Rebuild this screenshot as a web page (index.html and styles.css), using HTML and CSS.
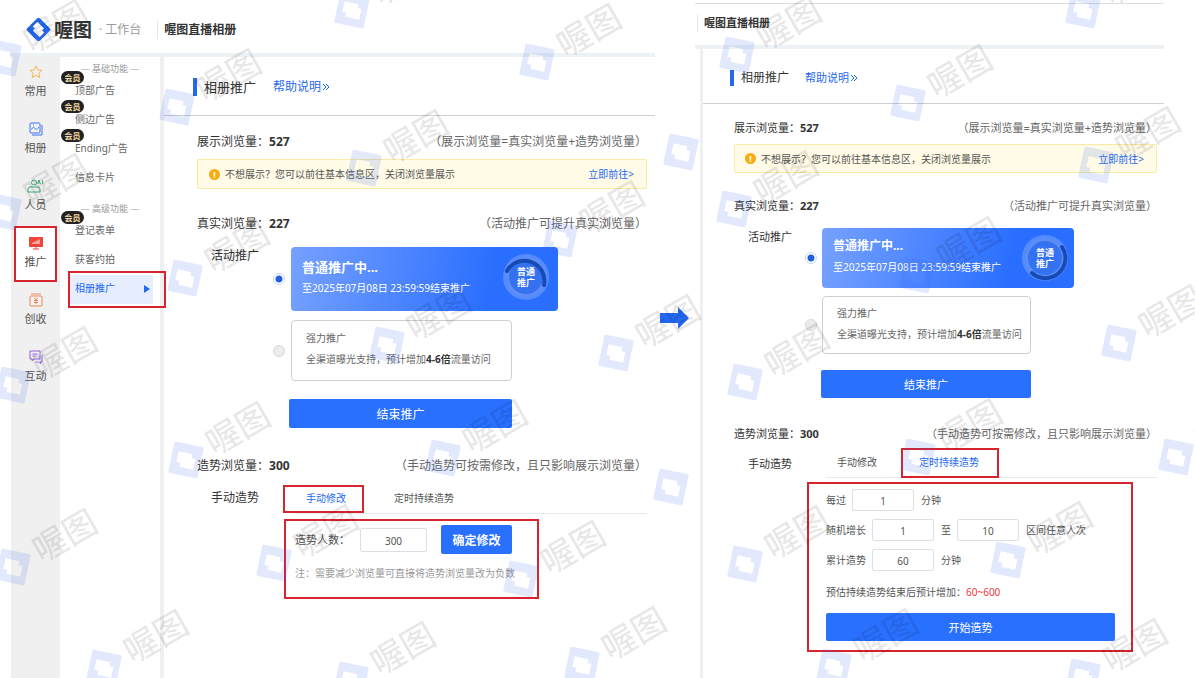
FILE: index.html
```html
<!DOCTYPE html>
<html lang="zh-CN">
<head>
  <meta charset="UTF-8" />
  <meta name="viewport" content="width=device-width, initial-scale=1" />
  <title>喔图直播相册</title>
  <link rel="stylesheet" href="styles.css">
</head>
<body>
  <section class="panel panel-main">
    <header class="topbar">
      <svg class="logo" viewBox="-12 -12 24 24"><rect transform="rotate(45)" x="-8.500" y="-8.500" width="17" height="17" rx="2" fill="#2468f2"/><path transform="rotate(45)" fill="#fff" d="M-6-4.500H3v2.500h3v6.500h-9V2h-3z"/></svg>
      <span class="brand">喔图</span>
      <span class="brand-sub">· 工作台</span>
      <span class="site-name">喔图直播相册</span>
    </header>
    <div class="workspace">
      <nav class="rail">
        <a href="#" class="rail-item">
          <svg viewBox="0 0 14 14" stroke="#f2b84b"><path d="M7 1l1.800 3.900 4.200.5-3.100 2.900.8 4.200L7 10.400l-3.700 2.100.8-4.200L1 5.400l4.200-.5z"/></svg>
          常用
        </a>
        <a href="#" class="rail-item">
          <svg viewBox="0 0 14 14" stroke="#3f74f0"><rect x="1" y="1" width="10" height="10" rx="1"/><path d="M13 3v10H3M2.500 7.500C4 4.500 5 5 6 6.500s2 1 4-1.500M4 3h1"/></svg>
          相册
        </a>
        <a href="#" class="rail-item">
          <svg class="wide" viewBox="0 0 17 14" stroke="#3fae7c"><circle cx="7" cy="3.500" r="2.500"/><path d="M1 13v-3q0-2 2-2h8q2 0 2 2v3z"/><path stroke-width=".9" d="M10.500 5l1.500-4 1.500 4M11 4h2M15.500 1v4"/></svg>
          人员
        </a>
        <a href="#" class="rail-item active">
          <svg viewBox="0 0 14 14"><rect width="14" height="10" y="1" rx="1" fill="#f0463a"/><path stroke="#fff" d="M4 8V6.500M6 8V5.500M8 8V4.500M10 8V3.500"/><path stroke="#f0463a" d="M7 11v2M4 13h6"/></svg>
          推广
        </a>
        <a href="#" class="rail-item">
          <svg viewBox="0 0 14 14" stroke="#ee8a58"><rect x="1" y="3" width="12" height="10" rx="1"/><path d="M2 1h10M5.500 5L7 7l1.500-2M5 7.500h4M5 9.500h4M7 7v4"/></svg>
          创收
        </a>
        <a href="#" class="rail-item">
          <svg viewBox="0 0 14 14" stroke="#8f62e0"><path d="M1 1h10v8H5L3 10.500V9H1zM3.500 4h5M3.500 6h3M13 5v7h-1.500v1.500L9.500 12H7"/></svg>
          互动
        </a>
      </nav>
      <nav class="submenu">
        <p class="submenu-title">— 基础功能 —</p>
        <a href="#" class="submenu-item"><span class="vip">会员</span>顶部广告</a>
        <a href="#" class="submenu-item"><span class="vip">会员</span>侧边广告</a>
        <a href="#" class="submenu-item"><span class="vip">会员</span>Ending广告</a>
        <a href="#" class="submenu-item">信息卡片</a>
        <p class="submenu-title">— 高级功能 —</p>
        <a href="#" class="submenu-item"><span class="vip">会员</span>登记表单</a>
        <a href="#" class="submenu-item">获客约拍</a>
        <a href="#" class="submenu-item active">相册推广</a>
      </nav>
      <main class="content">
        <div class="page-head">
          <h1>相册推广</h1>
          <a href="#">帮助说明<svg viewBox="0 0 8 8"><path d="M1 1l3 3-3 3M4 1l3 3-3 3"/></svg></a>
        </div>
        <div class="page-body">
          <div class="stat"><span>展示浏览量：<b>527</b></span><span class="hint">（展示浏览量=真实浏览量+造势浏览量）</span></div>
          <div class="notice"><i>!</i><span>不想展示？您可以前往基本信息区，关闭浏览量展示</span><a href="#">立即前往&gt;</a></div>
          <div class="stat stat-real"><span>真实浏览量：<b>227</b></span><span class="hint">（活动推广可提升真实浏览量）</span></div>
          <div class="field">
            <span class="field-label">活动推广</span>
            <div class="options">
              <label class="option">
                <input type="radio" name="promo" checked>
                <span class="card card-current">
                  <strong>普通推广中...</strong>
                  <span>至2025年07月08日 23:59:59结束推广</span>
                  <span class="dial"><svg viewBox="0 0 50 50"><circle class="dial-glow" cx="25" cy="25" r="20"/><path class="dial-arc" d="M6 19A20 20 0 0 1 43 33"/></svg><b>普通<br>推广</b></span>
                </span>
              </label>
              <label class="option">
                <input type="radio" name="promo" disabled>
                <span class="card card-strong">
                  <span>强力推广</span>
                  <span>全渠道曝光支持，预计增加<b>4-6倍</b>流量访问</span>
                </span>
              </label>
              <button class="btn btn-stop">结束推广</button>
            </div>
          </div>
          <div class="stat stat-boost"><span>造势浏览量：<b>300</b></span><span class="hint">（手动造势可按需修改，且只影响展示浏览量）</span></div>
          <div class="field field-boost">
            <span class="field-label">手动造势</span>
            <div>
              <div class="tabs">
                <button class="tab active">手动修改</button>
                <button class="tab">定时持续造势</button>
              </div>
              <form class="boost-form">
                <div class="form-row">
                  <label for="count">造势人数：</label>
                  <input type="text" id="count" value="300">
                  <button type="button" class="btn">确定修改</button>
                </div>
                <p>注：需要减少浏览量可直接将造势浏览量改为负数</p>
              </form>
            </div>
          </div>
        </div>
      </main>
    </div>
  </section>

  <svg class="arrow" viewBox="0 0 29 22"><path fill="#2468f2" d="M0 6h18V0l11 11-11 11v-6H0z"/></svg>

  <section class="panel panel-next">
    <header class="topbar">
      <span class="site-name">喔图直播相册</span>
    </header>
    <div class="workspace">
      <main class="content">
        <div class="page-head">
          <h1>相册推广</h1>
          <a href="#">帮助说明<svg viewBox="0 0 8 8"><path d="M1 1l3 3-3 3M4 1l3 3-3 3"/></svg></a>
        </div>
        <div class="page-body">
          <div class="stat"><span>展示浏览量：<b>527</b></span><span class="hint">（展示浏览量=真实浏览量+造势浏览量）</span></div>
          <div class="notice"><i>!</i><span>不想展示？您可以前往基本信息区，关闭浏览量展示</span><a href="#">立即前往&gt;</a></div>
          <div class="stat stat-real"><span>真实浏览量：<b>227</b></span><span class="hint">（活动推广可提升真实浏览量）</span></div>
          <div class="field">
            <span class="field-label">活动推广</span>
            <div class="options">
              <label class="option">
                <input type="radio" name="promo-next" checked>
                <span class="card card-current">
                  <strong>普通推广中...</strong>
                  <span>至2025年07月08日 23:59:59结束推广</span>
                  <span class="dial"><svg viewBox="0 0 50 50"><circle class="dial-glow" cx="25" cy="25" r="20"/><path class="dial-arc" d="M42 14A20 20 0 0 1 12 40"/></svg><b>普通<br>推广</b></span>
                </span>
              </label>
              <label class="option">
                <input type="radio" name="promo-next" disabled>
                <span class="card card-strong">
                  <span>强力推广</span>
                  <span>全渠道曝光支持，预计增加<b>4-6倍</b>流量访问</span>
                </span>
              </label>
              <button class="btn btn-stop">结束推广</button>
            </div>
          </div>
          <div class="stat stat-boost"><span>造势浏览量：<b>300</b></span><span class="hint">（手动造势可按需修改，且只影响展示浏览量）</span></div>
          <div class="field field-boost">
            <span class="field-label">手动造势</span>
            <div>
              <div class="tabs">
                <button class="tab">手动修改</button>
                <button class="tab active">定时持续造势</button>
              </div>
              <form class="boost-form">
                <div class="form-row">
                  <label for="every">每过</label>
                  <input type="text" id="every" value="1">
                  <span>分钟</span>
                </div>
                <div class="form-row">
                  <label for="min">随机增长</label>
                  <input type="text" id="min" value="1">
                  <label for="max">至</label>
                  <input type="text" id="max" value="10">
                  <span>区间任意人次</span>
                </div>
                <div class="form-row">
                  <label for="total">累计造势</label>
                  <input type="text" id="total" value="60">
                  <span>分钟</span>
                </div>
                <p>预估持续造势结束后预计增加：<em>60~600</em></p>
                <button type="button" class="btn">开始造势</button>
              </form>
            </div>
          </div>
        </div>
      </main>
    </div>
  </section>

  <!-- watermark layer -->
  <svg class="watermark" aria-hidden="true">
    <defs>
      <g id="wm-logo"><path transform="rotate(12)" fill-rule="evenodd" d="M-13 -16h26a2 2 0 0 1 2 2v28a2 2 0 0 1-2 2h-26a2 2 0 0 1-2-2v-28a2 2 0 0 1 2-2zM-9 -7v11h4v4h14v-11h-4v-4z"/></g>
      <g id="wm"><use href="#wm-logo"/><text transform="translate(52 -31) rotate(-30)" y="12" text-anchor="middle">喔图</text></g>
    </defs>
    <use href="#wm" x="4" y="58"/>
    <use href="#wm" x="177" y="107"/>
    <use href="#wm" x="352" y="10"/>
    <use href="#wm" x="537" y="62"/>
    <use href="#wm" x="364" y="168"/>
    <use href="#wm" x="560" y="239"/>
    <use href="#wm" x="4" y="212"/>
    <use href="#wm" x="185" y="278"/>
    <use href="#wm" x="387" y="345"/>
    <use href="#wm" x="616" y="353"/>
    <use href="#wm" x="13" y="385"/>
    <use href="#wm" x="186" y="460"/>
    <use href="#wm" x="443" y="458"/>
    <use href="#wm" x="13" y="567"/>
    <use href="#wm" x="274" y="563"/>
    <use href="#wm" x="521" y="579"/>
    <use href="#wm" x="104" y="668"/>
    <use href="#wm" x="351" y="680"/>
    <use href="#wm" x="582" y="665"/>
    <use href="#wm-logo" x="681" y="152"/>
    <use href="#wm-logo" x="671" y="487"/>
    <use href="#wm" x="737" y="55"/>
    <use href="#wm" x="908" y="103"/>
    <use href="#wm" x="1083" y="10"/>
    <use href="#wm" x="734" y="209"/>
    <use href="#wm" x="1096" y="165"/>
    <use href="#wm" x="917" y="275"/>
    <use href="#wm" x="1119" y="343"/>
    <use href="#wm" x="745" y="382"/>
    <use href="#wm" x="918" y="457"/>
    <use href="#wm" x="1176" y="457"/>
    <use href="#wm" x="745" y="564"/>
    <use href="#wm" x="1008" y="560"/>
    <use href="#wm" x="834" y="667"/>
    <use href="#wm" x="1083" y="677"/>
  </svg>
</body>
</html>
```
FILE: styles.css
```css
* {
  box-sizing: border-box;
}
body {
  margin: 0;
  padding: 0 31px 0 11px;
  min-height: 100vh;
  position: relative;
  display: grid;
  grid-template-columns: minmax(0, 644fr) 40px minmax(0, 469fr);
  background: #fff;
  color: #333;
  font-family: "Noto Sans", "Noto Sans CJK SC", sans-serif;
  font-size: 12px;
  line-height: 18px;
}
a {
  color: #2468f2;
  text-decoration: none;
}
p, h1 {
  margin: 0;
}
button, input {
  font-family: inherit;
}
.panel {
  display: flex;
  flex-direction: column;
}
.workspace {
  flex: 1;
  display: flex;
}
.content {
  flex: 1;
  min-width: 0;
}

/* top bar */
.topbar {
  height: 57px;
  display: flex;
  align-items: center;
  border-bottom: 4px solid #eef2f4;
  padding: 6px 0 0 15px;
}
.logo {
  width: 25px;
  height: 25px;
}
.brand {
  margin-left: 3px;
  font-size: 19px;
  font-weight: 700;
}
.brand-sub {
  margin-left: 7px;
  color: #999;
}
.site-name {
  margin-left: 16px;
  padding-left: 6px;
  border-left: 1px solid #e3e8ee;
  font-weight: 700;
}

/* icon rail */
.rail {
  width: 49px;
  background: #f0f0f0;
}
.rail-item {
  height: 56px;
  margin: 0 3px 1px;
  display: flex;
  flex-direction: column;
  align-items: center;
  padding-top: 8px;
  color: #555;
  font-size: 11px;
}
.rail-item svg {
  width: 14px;
  height: 14px;
  margin-bottom: 3px;
  fill: none;
  overflow: visible;
}
.rail-item .wide {
  width: 17px;
}
.rail-item.active {
  margin-top: -2px;
  margin-bottom: 3px;
  background: #fff;
  border: 2px solid #d9232e;
}

/* second level menu */
.submenu {
  width: 104px;
  padding-top: 3px;
  border-right: 4px solid #f0f0f0;
  font-size: 10px;
}
.submenu-title {
  height: 17px;
  color: #999;
  font-size: 9px;
  text-align: center;
}
.submenu-item + .submenu-title {
  margin-top: 7px;
}
.submenu-item {
  position: relative;
  display: block;
  height: 29px;
  padding-left: 15px;
  line-height: 27px;
  color: #666;
}
.vip {
  position: absolute;
  left: 1px;
  top: -6px;
  width: 23px;
  height: 13px;
  border-radius: 7px;
  background: #222;
  color: #f8dca6;
  font-size: 8px;
  font-weight: 700;
  line-height: 13px;
  text-align: center;
}
.submenu-item.active {
  margin: 0 7px 0 10px;
  padding-left: 5px;
  background: #e6edfd;
  color: #2468f2;
}
.submenu-item.active::before {
  content: "";
  position: absolute;
  right: 3px;
  top: 10px;
  border: 4px solid transparent;
  border-left: 6px solid #2468f2;
  border-right: 0;
}
.submenu-item.active::after {
  content: "";
  position: absolute;
  inset: -4px -13px -4px -2px;
  border: 2px solid #d9232e;
}

/* page title */
.page-head {
  height: 59px;
  display: flex;
  align-items: center;
  padding: 2px 0 0 29px;
  border-bottom: 1px solid #ccd0d4;
}
.page-head h1 {
  padding-left: 7px;
  border-left: 4px solid #2468f2;
  font-size: 13px;
  font-weight: 400;
}
.page-head a {
  margin-left: 17px;
}
.page-head svg {
  width: 8px;
  height: 8px;
  margin-left: 1px;
  fill: none;
  stroke: #2468f2;
}
.page-body {
  padding: 17px 8px 0 33px;
}

.stat {
  display: flex;
  justify-content: space-between;
  white-space: nowrap;
}
.hint {
  color: #666;
}
.stat-real {
  margin-top: 26px;
}
.stat-boost {
  margin-top: 29px;
}
.notice {
  margin-top: 8px;
  height: 30px;
  display: flex;
  align-items: center;
  padding: 0 12px 0 11px;
  background: #fffbe6;
  border: 1px solid #fbe9a6;
  border-radius: 2px;
  color: #555;
  font-size: 10px;
  white-space: nowrap;
}
.notice i {
  width: 11px;
  height: 11px;
  margin-right: 5px;
  border-radius: 50%;
  background: #f9ab10;
  color: #fff;
  font-size: 9px;
  font-style: normal;
  font-weight: 700;
  line-height: 11px;
  text-align: center;
}
.notice a {
  margin-left: auto;
  font-size: 10px;
}

.field {
  margin-top: 14px;
  padding-left: 14px;
  display: grid;
  grid-template-columns: 62px 1fr;
}
.option {
  display: flex;
  align-items: center;
  gap: 6px;
  margin-bottom: 9px;
}
.option input {
  appearance: none;
  flex: none;
  width: 12px;
  height: 12px;
  margin: 0;
  border: 1px solid #c4d6f5;
  border-radius: 50%;
  background: #fff;
}
.option input:checked {
  background: radial-gradient(#2060e0 3px, #fff 4px);
}
.option input:disabled {
  background: #ececec;
  border-color: #d8d8d8;
}
.card {
  position: relative;
  display: flex;
  flex-direction: column;
  justify-content: center;
  border-radius: 4px;
  font-size: 10px;
}
.card-current {
  width: 267px;
  height: 64px;
  padding: 0 0 4px 11px;
  gap: 3px;
  background: linear-gradient(100deg, #76a1ff, #2a6eff 75%);
  color: #fff;
}
.card-current strong {
  font-size: 13px;
}
.dial {
  position: absolute;
  right: 7px;
  top: 5px;
  width: 50px;
  height: 50px;
  display: grid;
  place-items: center;
}
.dial svg {
  position: absolute;
  inset: 0;
  fill: none;
}
.dial-glow {
  fill: #3572f2;
  stroke: rgba(255, 255, 255, 0.2);
  stroke-width: 6;
}
.dial-arc {
  stroke: #164bb5;
  stroke-width: 4;
  stroke-linecap: round;
}
.dial b {
  position: relative;
  font-size: 9px;
  line-height: 11px;
}
.card-strong {
  width: 221px;
  height: 61px;
  padding: 0 0 4px 14px;
  gap: 3px;
  border: 1px solid #cfcfcf;
  color: #666;
}
.card-strong b {
  color: #333;
}
.btn {
  border: 0;
  border-radius: 2px;
  background: #2970ff;
  color: #fff;
  font-size: 12px;
}
.btn-stop {
  display: block;
  width: 223px;
  height: 29px;
  margin: 18px 0 0 16px;
}

/* boost settings */
.field-boost {
  margin-top: 10px;
}
.field-boost .field-label {
  line-height: 26px;
}
.tabs {
  height: 29px;
  margin-left: 22px;
  display: flex;
  gap: 26px;
  border-bottom: 1px solid #e8eaee;
}
.tab {
  position: relative;
  padding: 0 11px 4px;
  border: 0;
  background: none;
  color: #555;
  font-size: 10px;
  white-space: nowrap;
}
.tab.active {
  color: #2468f2;
}
.tab.active::after {
  content: "";
  position: absolute;
  inset: 0 -7px 0 -12px;
  border: 2px solid #d9232e;
}
.boost-form {
  width: 255px;
  margin: 5px 0 0 11px;
  padding: 4px 9px 15px;
  border: 2px solid #d9232e;
}
.form-row {
  display: flex;
  align-items: center;
  white-space: nowrap;
  color: #555;
  font-size: 11px;
}
.form-row input {
  width: 67px;
  height: 24px;
  margin: 0 14px 0 10px;
  padding: 2px 0 0;
  border: 1px solid #dcdfe6;
  border-radius: 2px;
  color: #555;
  font-size: 10px;
  text-align: center;
}
.form-row .btn {
  width: 71px;
  height: 29px;
  font-weight: 700;
}
.boost-form p {
  margin-top: 10px;
  color: #999;
  font-size: 10px;
  white-space: nowrap;
}

.arrow {
  width: 29px;
  height: 22px;
  margin: 307px 0 0 5px;
}

/* second, slightly smaller screen */
.panel-next {
  margin-top: 3px;
  border-top: 1px solid #ddd;
  font-size: 11px;
}
.panel-next .topbar {
  height: 45px;
  padding: 0 0 3px 2px;
}
.panel-next .site-name {
  margin-left: 0;
}
.panel-next .workspace {
  margin-left: 5px;
  border-left: 3px solid #f0f0f0;
}
.panel-next .page-head {
  height: 55px;
  padding-top: 3px;
  padding-left: 27px;
}
.panel-next .page-head h1 {
  font-size: 12px;
  line-height: 16px;
}
.panel-next .page-head a {
  margin-left: 16px;
}
.panel-next .page-body {
  padding: 15px 7px 0 31px;
}
.panel-next .notice {
  margin-top: 7px;
  height: 29px;
  padding-left: 10px;
}
.panel-next .stat-real {
  margin-top: 24px;
}
.panel-next .stat-boost {
  margin-top: 27px;
}
.panel-next .field {
  margin-top: 13px;
  grid-template-columns: 57px 1fr;
}
.panel-next .option {
  gap: 5px;
  margin-bottom: 8px;
}
.panel-next .card-current {
  width: 252px;
  height: 60px;
}
.panel-next .card-current strong {
  font-size: 12px;
}
.panel-next .dial {
  right: 4px;
}
.panel-next .card-strong {
  width: 209px;
  height: 58px;
}
.panel-next .btn {
  font-size: 11px;
}
.panel-next .btn-stop {
  width: 210px;
  height: 28px;
  margin-top: 16px;
}
.panel-next .field-boost {
  margin-top: 5px;
}
.panel-next .field-label {
  line-height: 18px;
}
.panel-next .field-boost .field-label {
  line-height: 32px;
}
.panel-next .tabs {
  height: 30px;
  margin-left: 21px;
  gap: 20px;
}
.panel-next .tab {
  padding-bottom: 2px;
}
.panel-next .tab.active::after {
  inset: 0 -9px -1px -7px;
}
.panel-next .boost-form {
  width: 326px;
  margin: 4px 0 0 2px;
  padding: 5px 16px 9px 17px;
}
.panel-next .form-row {
  margin-bottom: 8px;
  font-size: 10px;
}
.panel-next .form-row input {
  width: 62px;
  height: 22px;
  margin: 0 7px 0 6px;
}
.panel-next .boost-form p {
  margin: 12px 0;
  color: #555;
}
.boost-form em {
  color: #f5363e;
  font-style: normal;
}
.panel-next .boost-form .btn {
  width: 100%;
  height: 28px;
}

.watermark {
  position: absolute;
  inset: 0;
  width: 100%;
  height: 100%;
  overflow: hidden;
  pointer-events: none;
  fill: rgba(50, 100, 240, 0.14);
}
.watermark text {
  fill: rgba(0, 0, 0, 0.09);
  font-size: 34px;
  font-weight: 500;
}
```
